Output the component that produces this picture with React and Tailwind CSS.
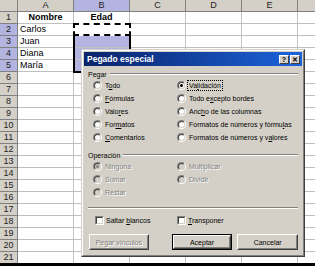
const cols = ["A", "B", "C", "D", "E", "F"];
const rows = Array.from({ length: 22 }, (_, i) => i + 1);
const names = { 2: "Carlos", 3: "Juan", 4: "Diana", 5: "María" };

function Radio({ checked, disabled }) {
  return (
    <span className="w-[9px] h-[9px] shrink-0 rounded-full border border-t-[#808080] border-l-[#808080] border-b-white border-r-white">
      <span className={`flex w-full h-full items-center justify-center rounded-full border border-t-[#404040] border-l-[#404040] border-b-[#d4d0c8] border-r-[#d4d0c8] ${disabled ? "bg-[#d4d0c8]" : "bg-white"}`}>
        {checked && <span className={`w-[3px] h-[3px] rounded-full ${disabled ? "bg-[#808080]" : "bg-black"}`} />}
      </span>
    </span>
  );
}

function Check() {
  return (
    <span className="w-[9px] h-[9px] shrink-0 border border-t-[#808080] border-l-[#808080] border-b-white border-r-white">
      <span className="block w-full h-full bg-white border border-t-[#404040] border-l-[#404040] border-b-[#d4d0c8] border-r-[#d4d0c8]" />
    </span>
  );
}

function Option({ children, checked, disabled, focus }) {
  return (
    <div className="flex items-center gap-[2px] h-[13px]">
      <Radio checked={checked} disabled={disabled} />
      <span
        className={`${disabled ? "text-[#808080] [text-shadow:1px_1px_0_#fff]" : "text-black"} ${focus ? "outline outline-1 outline-dotted outline-black px-[1px]" : "px-[1px]"} leading-[9px]`}
      >
        {children}
      </span>
    </div>
  );
}

function GroupLabel({ children }) {
  return (
    <div className="flex items-center gap-[3px] h-[10px]">
      <span>{children}</span>
      <span className="flex-1 border-t border-t-[#808080] border-b border-b-white" />
    </div>
  );
}

function Button({ children, def, disabled, className }) {
  const face = (
    <div className="w-full h-full border border-t-white border-l-white border-r-[#404040] border-b-[#404040]">
      <div className="w-full h-full flex items-center justify-center border border-t-[#d4d0c8] border-l-[#d4d0c8] border-r-[#808080] border-b-[#808080]">
        <span className={disabled ? "text-[#808080] [text-shadow:1px_1px_0_#fff]" : "text-black"}>{children}</span>
      </div>
    </div>
  );
  return (
    <div className={`h-[16px] ${className}`}>
      {def ? <div className="w-full h-full border border-black">{face}</div> : face}
    </div>
  );
}

function Dialog() {
  return (
    <div className="absolute left-[81px] top-[49px] w-[224px] h-[208px] bg-[#d4d0c8] border border-t-[#d4d0c8] border-l-[#d4d0c8] border-r-[#404040] border-b-[#404040] text-[7px]">
      <div className="w-full h-full border border-t-white border-l-white border-r-[#808080] border-b-[#808080] p-[1px]">
        {/* title bar */}
        <div className="h-[14px] flex items-center bg-linear-to-r from-[#0a246a] to-[#1c64dc] pl-[3px] pr-[2px]">
          <span className="text-white font-bold text-[8.5px] flex-1">Pegado especial</span>
          <div className="flex gap-[1px]">
            <span className="w-[10px] h-[9px] bg-[#d4d0c8] border border-t-white border-l-white border-r-[#404040] border-b-[#404040] flex items-center justify-center text-[7px] font-bold leading-none">?</span>
            <span className="w-[10px] h-[9px] bg-[#d4d0c8] border border-t-white border-l-white border-r-[#404040] border-b-[#404040] flex items-center justify-center text-[7px] font-bold leading-none">✕</span>
          </div>
        </div>

        {/* body */}
        <div className="px-[4px] pt-[3px]">
          <GroupLabel>Pegar</GroupLabel>
          <div className="grid grid-cols-[84px_1fr] pl-[5px]">
            <Option>T<u>o</u>do</Option>
            <Option checked focus>Va<u>l</u>idación</Option>
            <Option><u>F</u>órmulas</Option>
            <Option>Todo e<u>x</u>cepto bordes</Option>
            <Option>Valo<u>r</u>es</Option>
            <Option>Anc<u>h</u>o de las columnas</Option>
            <Option>For<u>m</u>atos</Option>
            <Option>Formatos de números y fórmu<u>l</u>as</Option>
            <Option><u>C</u>omentarios</Option>
            <Option>Formatos de números y v<u>a</u>lores</Option>
          </div>

          <div className="mt-[6px]">
            <GroupLabel>Operación</GroupLabel>
          </div>
          <div className="grid grid-cols-[84px_1fr] pl-[5px]">
            <Option checked disabled>Ninguna</Option>
            <Option disabled>Multiplicar</Option>
            <Option disabled>Sumar</Option>
            <Option disabled>Dividir</Option>
            <Option disabled>Restar</Option>
          </div>

          <div className="mt-[8px] border-t border-t-[#808080] border-b border-b-white" />

          <div className="mt-[4px] h-[14px] grid grid-cols-[82px_1fr] pl-[7px] items-center">
            <div className="flex items-center gap-[2px]">
              <Check />
              <span>Saltar <u>b</u>lancos</span>
            </div>
            <div className="flex items-center gap-[2px]">
              <Check />
              <span><u>T</u>ransponer</span>
            </div>
          </div>

          <div className="mt-[7px] flex pl-[1px]">
            <Button disabled className="w-[60px]">Pegar vínculos</Button>
            <Button def className="w-[61px] ml-[23px]">Aceptar</Button>
            <Button className="w-[61px] ml-[5px]">Cancelar</Button>
          </div>
        </div>
      </div>
    </div>
  );
}

export default function App() {
  return (
    <div className="relative w-[315px] h-[266px] overflow-hidden bg-white border-b-[3px] border-black font-['Liberation_Sans',Arial,sans-serif] text-[9px] leading-[11px]">
      {/* column headers */}
      <div className="flex h-[12px]">
        <div className="w-[18px] shrink-0 bg-[#d4d0c8] border-r border-b border-[#808080]" />
        {cols.map((c) => (
          <div
            key={c}
            className={`w-[56px] shrink-0 border-r border-b border-[#808080] text-center text-[#222] ${c === "B" ? "bg-[#b4b4e0]" : "bg-[#d4d0c8]"}`}
          >
            {c === "F" ? null : c}
          </div>
        ))}
      </div>

      {rows.map((r) => {
        const sel = r >= 2 && r <= 5;
        return (
          <div key={r} className="flex h-[12px]">
            <div className={`w-[18px] shrink-0 border-r border-b border-[#808080] text-center text-[#222] ${sel ? "bg-[#b4b4e0]" : "bg-[#d4d0c8]"}`}>
              {r < 22 ? r : null}
            </div>
            {cols.map((c) => {
              let content = null;
              let cls = "";
              if (r === 1 && c === "A") { content = "Nombre"; cls = "font-bold text-center"; }
              if (r === 1 && c === "B") { content = "Edad"; cls = "font-bold text-center"; }
              if (c === "A" && names[r]) { content = names[r]; cls = "pl-[2px]"; }
              const fill = c === "B" && r >= 3 && r <= 5 ? "bg-[#b4b4e0]" : "";
              return (
                <div key={c} className={`w-[56px] shrink-0 border-r border-b border-[#c0c0c0] ${cls} ${fill}`}>
                  {content}
                </div>
              );
            })}
          </div>
        );
      })}

      {/* selection B2:B5 */}
      <div className="absolute left-[73px] top-[23px] w-[58px] h-[50px] border-2 border-black" />
      {/* copy marquee B2 */}
      <div className="absolute left-[73px] top-[23px] w-[58px] h-[13px] border-2 border-dashed border-black bg-white" />

      <Dialog />
    </div>
  );
}
